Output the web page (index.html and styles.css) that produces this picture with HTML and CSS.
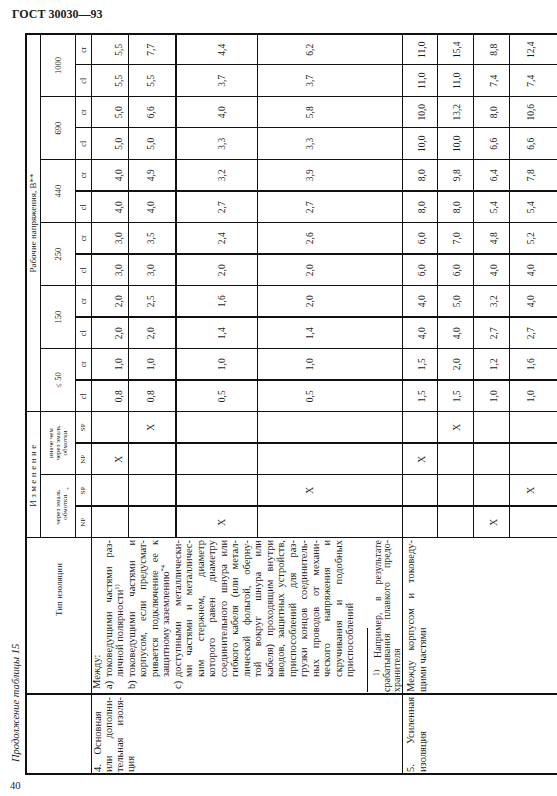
FILE: index.html
```html
<!DOCTYPE html>
<html lang="ru">
<head>
<meta charset="utf-8">
<title>ГОСТ 30030—93</title>
<link rel="stylesheet" href="styles.css">
</head>
<body>
<div class="hd">ГОСТ 30030—93</div>
<div class="sheet">
  <div class="rot">
    <div class="cap">Продолжение таблицы 15</div>
    <div class="tbl">
      <div class="c h1 hA"></div>
      <div class="c h1 hB">Тип изоляции</div>
      <div class="c hr1 sp4 izm">Изменение</div>
      <div class="c hr1 sp12 tk">Рабочие напряжения, В**</div>

      <div class="c hr2 sp2 ch">через эмаль<br>обмотки<sup>*</sup></div>
      <div class="c hr2 sp2 ch">иначе чем<br>через эмаль<br>обмотки</div>
      <div class="c hr2 sp2">≤ 50</div>
      <div class="c hr2 sp2">150</div>
      <div class="c hr2 sp2">250</div>
      <div class="c hr2 sp2">440</div>
      <div class="c hr2 sp2">690</div>
      <div class="c hr2 sp2 tk">1000</div>

      <div class="row r3">
        <div class="np">NP</div><div class="np">SP</div><div class="np">NP</div><div class="np">SP</div>
        <div>cl</div><div>cr</div><div>cl</div><div>cr</div><div>cl</div><div>cr</div>
        <div>cl</div><div>cr</div><div>cl</div><div>cr</div><div>cl</div><div>cr</div>
      </div>

      <div class="c cat">
        <div class="ln"><span class="tx l first">4. Основная</span></div>
        <div class="ln"><span class="tx">или дополни-</span></div>
        <div class="ln"><span class="tx">тельная изоля-</span></div>
        <div class="ln"><span class="tx l">ция</span></div>
      </div>
      <div class="c desc">
        <div class="in">
          <div class="ln"><span class="tx l">Между:</span></div>
          <div class="ln"><span class="lb">a)</span><span class="tx">токоведущими частями раз-</span></div>
          <div class="ln"><span class="lb"></span><span class="tx l">личной полярности<sup>1)</sup></span></div>
          <div class="ln"><span class="lb">b)</span><span class="tx">токоведущими частями и</span></div>
          <div class="ln"><span class="lb"></span><span class="tx">корпусом, если предусмат-</span></div>
          <div class="ln"><span class="lb"></span><span class="tx">ривается подключение ее к</span></div>
          <div class="ln"><span class="lb"></span><span class="tx l">защитному заземлению<sup>*4</sup></span></div>
          <div class="ln"><span class="lb">c)</span><span class="tx">доступными металлически-</span></div>
          <div class="ln"><span class="lb"></span><span class="tx">ми частями и металличес-</span></div>
          <div class="ln"><span class="lb"></span><span class="tx">ким стержнем, диаметр</span></div>
          <div class="ln"><span class="lb"></span><span class="tx">которого равен диаметру</span></div>
          <div class="ln"><span class="lb"></span><span class="tx">соединительного шнура или</span></div>
          <div class="ln"><span class="lb"></span><span class="tx">гибкого кабеля (или метал-</span></div>
          <div class="ln"><span class="lb"></span><span class="tx">лической фольгой, оберну-</span></div>
          <div class="ln"><span class="lb"></span><span class="tx">той вокруг шнура или</span></div>
          <div class="ln"><span class="lb"></span><span class="tx">кабеля) проходящим внутри</span></div>
          <div class="ln"><span class="lb"></span><span class="tx">вводов, защитных устройств,</span></div>
          <div class="ln"><span class="lb"></span><span class="tx">приспособлений для раз-</span></div>
          <div class="ln"><span class="lb"></span><span class="tx">грузки концов соединитель-</span></div>
          <div class="ln"><span class="lb"></span><span class="tx">ных проводов от механи-</span></div>
          <div class="ln"><span class="lb"></span><span class="tx">ческого напряжения и</span></div>
          <div class="ln"><span class="lb"></span><span class="tx">скручивания и подобных</span></div>
          <div class="ln"><span class="lb"></span><span class="tx l">приспособлений</span></div>
        </div>
        <div class="fn-sep"></div>
        <div class="fn">
          <div class="fl ind"><sup class="fs">1)</sup> Например, в результате</div>
          <div class="fl">срабатывания плавкого предо-</div>
          <div class="fl l">хранителя</div>
        </div>
      </div>

      <div class="row ra">
        <div></div><div></div><div class="x">X</div><div></div>
        <div>0,8</div><div>1,0</div><div>2,0</div><div>2,0</div><div>3,0</div><div>3,0</div>
        <div>4,0</div><div>4,0</div><div>5,0</div><div>5,0</div><div>5,5</div><div>5,5</div>
      </div>
      <div class="row rb">
        <div></div><div></div><div></div><div class="x">X</div>
        <div>0,8</div><div>1,0</div><div>2,0</div><div>2,5</div><div>3,0</div><div>3,5</div>
        <div>4,0</div><div>4,9</div><div>5,0</div><div>6,6</div><div>5,5</div><div>7,7</div>
      </div>
      <div class="row rc">
        <div class="x">X</div><div></div><div></div><div></div>
        <div>0,5</div><div>1,0</div><div>1,4</div><div>1,6</div><div>2,0</div><div>2,4</div>
        <div>2,7</div><div>3,2</div><div>3,3</div><div>4,0</div><div>3,7</div><div>4,4</div>
      </div>
      <div class="row rd">
        <div></div><div class="x">X</div><div></div><div></div>
        <div>0,5</div><div>1,0</div><div>1,4</div><div>2,0</div><div>2,0</div><div>2,6</div>
        <div>2,7</div><div>3,9</div><div>3,3</div><div>5,8</div><div>3,7</div><div>6,2</div>
      </div>

      <div class="c cat cat5">
        <div class="ln2"><span class="tx">5. Усиленная</span></div>
        <div class="ln2"><span class="tx l">изоляция</span></div>
      </div>
      <div class="c desc desc5">
        <div class="ln2"><span class="tx">Между корпусом и токоведу-</span></div>
        <div class="ln2"><span class="tx l">щими частями</span></div>
      </div>

      <div class="row re">
        <div></div><div></div><div class="x">X</div><div></div>
        <div>1,5</div><div>1,5</div><div>4,0</div><div>4,0</div><div>6,0</div><div>6,0</div>
        <div>8,0</div><div>8,0</div><div>10,0</div><div>10,0</div><div>11,0</div><div>11,0</div>
      </div>
      <div class="row rf">
        <div></div><div></div><div></div><div class="x">X</div>
        <div>1,5</div><div>2,0</div><div>4,0</div><div>5,0</div><div>6,0</div><div>7,0</div>
        <div>8,0</div><div>9,8</div><div>10,0</div><div>13,2</div><div>11,0</div><div>15,4</div>
      </div>
      <div class="row rg">
        <div class="x">X</div><div></div><div></div><div></div>
        <div>1,0</div><div>1,2</div><div>2,7</div><div>3,2</div><div>4,0</div><div>4,8</div>
        <div>5,4</div><div>6,4</div><div>6,6</div><div>8,0</div><div>7,4</div><div>8,8</div>
      </div>
      <div class="row rh">
        <div></div><div class="x">X</div><div></div><div></div>
        <div>1,0</div><div>1,6</div><div>2,7</div><div>4,0</div><div>4,0</div><div>5,2</div>
        <div>5,4</div><div>7,8</div><div>6,6</div><div>10,6</div><div>7,4</div><div>12,4</div>
      </div>
    </div>
  </div>
</div>
<div class="pg">40</div>
</body>
</html>
```

FILE: styles.css
```css
html, body {
  margin: 0;
  padding: 0;
  background: #ffffff;
  overflow: hidden;
}

body {
  width: 557px;
  height: 796px;
  font-family: "Liberation Serif", "Times New Roman", serif;
  color: #1e1e1e;
}

.hd {
  height: 33px;
  box-sizing: border-box;
  padding: 7px 0 0 12px;
  font-weight: bold;
  font-size: 12px;
  line-height: 14px;
}

.sheet {
  height: 742px;
  overflow: hidden;
}

.rot {
  width: 742px;
  transform-origin: 0 0;
  transform: translateY(742px) rotate(-90deg);
}

.cap {
  height: 25px;
  box-sizing: border-box;
  padding: 10px 0 0 13px;
  font-style: italic;
  font-size: 10.5px;
  line-height: 12px;
}

.tbl {
  display: grid;
  width: 742px;
  box-sizing: border-box;
  grid-template-columns: 80px 156px repeat(16, 31.5px);
  grid-template-rows: 14px 35px 16px 37px 48px 81px 145px 35px 36px 36px 50px;
  border-top: 2px solid #111;
  border-left: 2px solid #111;
}

.c {
  box-sizing: border-box;
  border-right: 1px solid #111;
  border-bottom: 1px solid #111;
  min-width: 0;
  overflow: hidden;
}

.h1 { grid-row: span 3; }
.sp2 { grid-column: span 2; }
.sp4 { grid-column: span 4; }
.sp12 { grid-column: span 12; }
.tk { border-right-width: 2px; }
.hA { border-right-width: 2px; }

.hB {
  display: flex;
  align-items: center;
  justify-content: center;
  padding-left: 52px;
  font-size: 9px;
}

.hr1 {
  font-size: 9px;
  line-height: 13px;
  text-align: center;
}

.izm { letter-spacing: 2.5px; }

.hr2 {
  display: flex;
  align-items: center;
  justify-content: center;
  text-align: center;
  font-size: 8.5px;
}

.hr2.ch {
  align-items: flex-end;
  font-size: 7px;
  line-height: 7px;
  padding-bottom: 6px;
}

.ch sup {
  font-size: 5px;
  line-height: 0;
  vertical-align: 2px;
}

.row { display: contents; }

.row > div {
  box-sizing: border-box;
  border-right: 1px solid #111;
  border-bottom: 1px solid #111;
  text-align: center;
  font-size: 9.5px;
  line-height: 10px;
  min-width: 0;
}

.row > div:nth-child(2n+1):nth-child(-n+11),
.row > div:nth-child(16) {
  border-right-width: 2px;
}

.row.r3 > div {
  font-size: 8px;
  line-height: 15px;
}

.row.r3 > div.np { font-size: 7px; }

.row > div.x { font-size: 10px; }

.ra > div { padding-top: 21.5px; }
.rb > div { padding-top: 16.5px; border-bottom-width: 2px; }
.rc > div { padding-top: 40px; }
.rd > div { padding-top: 47px; }
.re > div { padding-top: 13.5px; }
.rf > div { padding-top: 14px; }
.rg > div { padding-top: 14.5px; }
.rh > div { padding-top: 15.5px; }

.cat {
  grid-row: span 4;
  border-right-width: 2px;
  padding: 0 2px 0 1px;
  font-size: 10.5px;
  line-height: 11px;
}

.cat .ln { height: 11px; }
.first { word-spacing: 7px; }

.desc {
  grid-row: span 4;
  padding: 0 2px 0 4px;
  font-size: 10.5px;
  line-height: 11.5px;
  overflow: visible;
}

.desc .in { margin-top: -1px; }

.ln {
  display: flex;
  height: 11.5px;
}

.ln .lb {
  width: 12px;
  flex: none;
}

.tx {
  flex: 1;
  display: block;
  text-align: justify;
  text-align-last: justify;
}

.tx.l { text-align-last: left; }

sup {
  font-size: 6.5px;
  line-height: 0;
  vertical-align: 4px;
}

.fn-sep {
  width: 64px;
  height: 1px;
  background: #111;
  margin: 11px 0 0 -3px;
}

.fn {
  margin: 5px 0 0 -3px;
  font-size: 10px;
  line-height: 9.5px;
}

.fl {
  height: 9.5px;
  text-align: justify;
  text-align-last: justify;
}

.fl.ind { padding-left: 16px; }
.fl.l { text-align-last: left; }

.fs {
  font-size: 7.5px;
  vertical-align: 2px;
}

.cat5 {
  padding-top: 1.5px;
  line-height: 12px;
}

.desc5 {
  padding: 1.5px 2px 0 1px;
  line-height: 12px;
}

.ln2 {
  height: 12px;
  display: flex;
}

.pg {
  padding: 5px 0 0 10px;
  font-size: 10.5px;
  line-height: 12px;
}
```
